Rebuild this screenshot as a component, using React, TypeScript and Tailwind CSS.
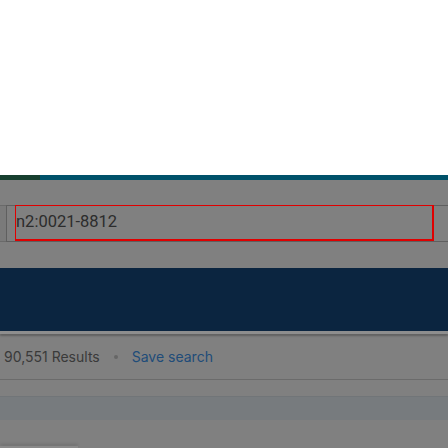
export default function App() {
  return (
    <div className="flex h-[448px] w-[448px] flex-col overflow-hidden bg-[#808080] font-['Inter',sans-serif]">
      <div className="h-[175px] shrink-0 bg-white" />
      <div className="flex h-[5px] shrink-0">
        <div className="w-[40px] bg-[#173f2f]" />
        <div className="flex-1 bg-[#00526a]" />
      </div>
      <div className="h-[25px] shrink-0" />
      <div className="flex h-[37px] shrink-0">
        <div className="w-[6px] border-y border-[#6a6a6a] bg-[#7a7a7a]" />
        <div className="flex flex-1 items-stretch border-y border-l border-[#5f5f5f] pl-[8px]">
          <div className="-mt-px flex w-[419px] items-center border-2 border-t border-l-[1.5px] border-[#e00000]">
            <span className="font-['Roboto',sans-serif] text-[16.5px] leading-none text-[#2c2c2c]">
              n2:0021-8812
            </span>
          </div>
        </div>
      </div>
      <div className="h-[26px] shrink-0" />
      <div className="h-[63px] shrink-0 bg-[#0b2540]" />
      <div className="h-[3px] shrink-0 bg-[#8e8e8e] shadow-[0_2px_2px_rgba(0,0,0,0.25)]" />
      <div className="flex h-[45px] shrink-0 items-center gap-[14px] px-[4px] text-[14px]">
        <span className="text-[#3a3a3a]">90,551 Results</span>
        <span className="h-[4px] w-[4px] rounded-full bg-[#666]" />
        <span className="text-[#204c79]">Save search</span>
      </div>
      <div className="h-px shrink-0 bg-[#6b6b6b]" />
      <div className="h-[16px] shrink-0" />
      <div className="h-[24px] shrink-0 border-t border-[#717578] bg-[#777b7e]" />
      <div className="flex flex-1 items-end">
        <div className="h-[2px] w-[78px] bg-[#8a8a8a] shadow-[0_-2px_3px_rgba(0,0,0,0.15)]" />
      </div>
    </div>
  );
}
